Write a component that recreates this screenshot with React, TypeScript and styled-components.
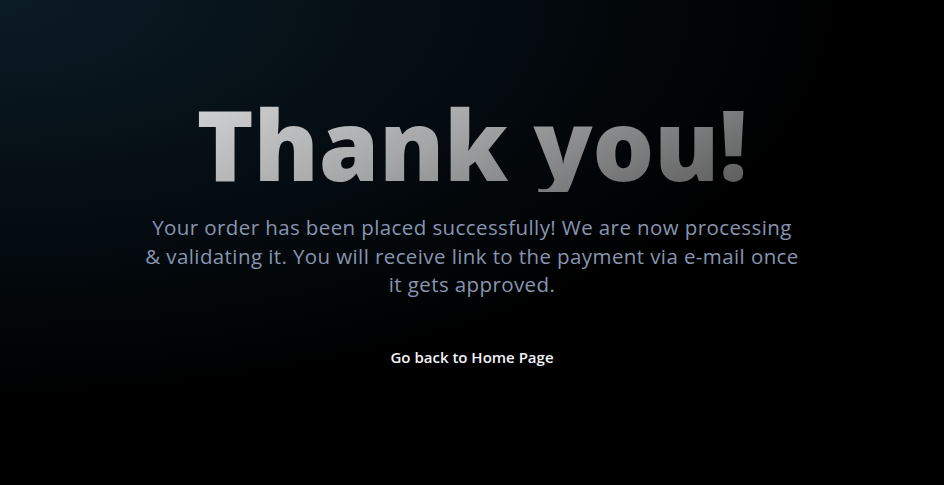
import React from "react";
import styled, { createGlobalStyle } from "styled-components";

const GlobalStyle = createGlobalStyle`
  html, body {
    margin: 0;
    padding: 0;
    height: 100%;
  }
  body {
    font-family: "Open Sans", "Noto Sans", sans-serif;
    background: #000;
  }
  #root {
    height: 100%;
  }
`;

const Page = styled.main`
  min-height: 485px;
  height: 100%;
  display: flex;
  flex-direction: column;
  align-items: center;
  padding-top: 95px;
  box-sizing: border-box;
  background: radial-gradient(
    ellipse 120% 110% at 0% 0%,
    #0b1b25 0%,
    #040b10 45%,
    #000000 75%
  );
`;

const Title = styled.h1`
  margin: 0;
  font-family: "Open Sans", sans-serif;
  font-weight: 800;
  font-size: 97px;
  line-height: 1;
  background: linear-gradient(155deg, #d2d4d6 0%, #a4a5a7 45%, #5a5a5a 100%);
  -webkit-background-clip: text;
  background-clip: text;
  color: transparent;
`;

const Message = styled.p`
  margin: 21px 0 0;
  max-width: 660px;
  text-align: center;
  font-family: "Open Sans", sans-serif;
  font-size: 20.5px;
  letter-spacing: 0.4px;
  line-height: 28.5px;
  color: #8795b0;
`;

const HomeLink = styled.a`
  margin-top: 48px;
  font-family: "Open Sans", sans-serif;
  font-weight: 600;
  font-size: 15px;
  color: #f2f4f8;
  text-decoration: none;
  cursor: pointer;
`;

export default function App() {
  return (
    <>
      <GlobalStyle />
      <Page>
        <Title>Thank you!</Title>
        <Message>
          Your order has been placed successfully! We are now processing
          &amp; validating it. You will receive link to the payment via e-mail
          once it gets approved.
        </Message>
        <HomeLink href="#">Go back to Home Page</HomeLink>
      </Page>
    </>
  );
}
